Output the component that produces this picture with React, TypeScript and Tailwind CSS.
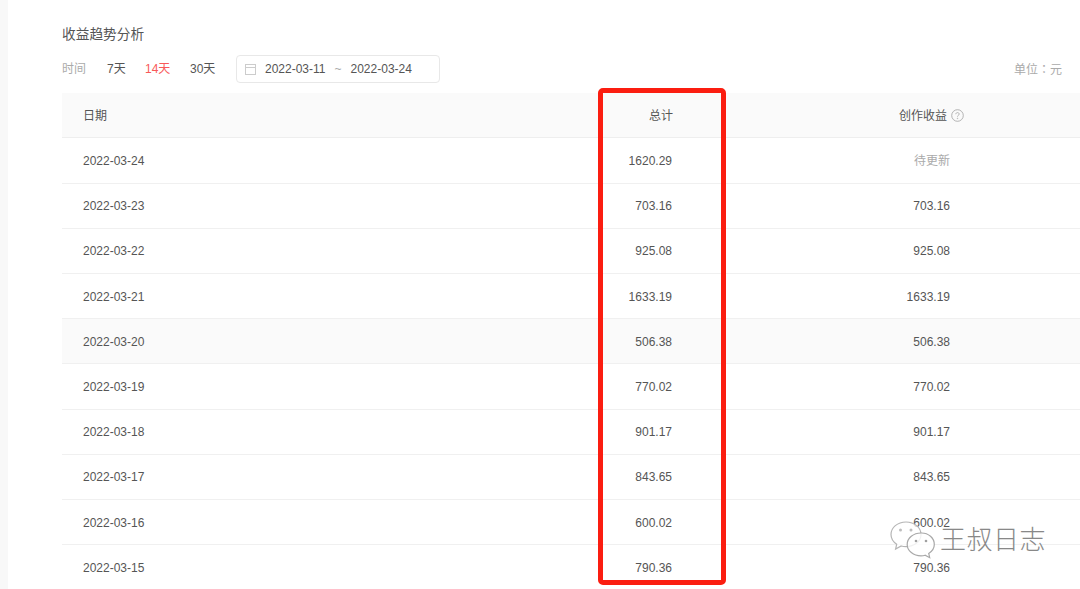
const rows = [
  { date: "2022-03-24", total: "1620.29", income: "待更新" },
  { date: "2022-03-23", total: "703.16", income: "703.16" },
  { date: "2022-03-22", total: "925.08", income: "925.08" },
  { date: "2022-03-21", total: "1633.19", income: "1633.19" },
  { date: "2022-03-20", total: "506.38", income: "506.38" },
  { date: "2022-03-19", total: "770.02", income: "770.02" },
  { date: "2022-03-18", total: "901.17", income: "901.17" },
  { date: "2022-03-17", total: "843.65", income: "843.65" },
  { date: "2022-03-16", total: "600.02", income: "600.02" },
  { date: "2022-03-15", total: "790.36", income: "790.36" },
];

function WeChatMark() {
  return (
    <svg width="46" height="38" viewBox="0 0 46 38" fill="none">
      <path
        d="M16 1C7.5 1 1 6.6 1 13.5c0 4 2.200 7.400 5.700 9.700L5.600 28l5.600-3c1.500.4 3 .6 4.800.6 8.500 0 15-5.400 15-12.100C31 6.600 24.500 1 16 1z"
        fill="#ffffff"
        fillOpacity="0.75"
        stroke="#b5b5b5"
        strokeWidth="1.200"
      />
      <path
        d="M31 12c-7.500 0-13.800 5-13.800 11.400S23.500 34.800 31 34.800c1.400 0 2.800-.2 4.100-.6l4.600 2.500-1-4.300c3.300-2.100 5.600-5.400 5.600-9 0-6.400-5.900-11.400-12.700-11.400z"
        fill="#ffffff"
        fillOpacity="0.8"
        stroke="#a8a8a8"
        strokeWidth="1.200"
      />
      <circle cx="10.500" cy="9" r="1.500" fill="#bdbdbd" />
      <circle cx="21" cy="9" r="1.500" fill="#bdbdbd" />
      <circle cx="26" cy="20" r="1.300" fill="#a0a0a0" />
      <circle cx="36" cy="20" r="1.300" fill="#a0a0a0" />
    </svg>
  );
}

export default function App() {
  return (
    <div className="relative h-[589px] w-[1080px] overflow-hidden bg-white font-['Liberation_Sans','Noto_Sans_CJK_SC',sans-serif] text-xs text-[#555]">
      <div className="flex h-full">
        <div className="w-2 shrink-0 bg-[#f8f8f8]" />

        <main className="w-[1072px] shrink-0 pl-[54px] pt-[26px]">
          <h2 className="h-[18px] text-[13.700px] leading-[18px] text-[#555]">收益趋势分析</h2>

          <div className="mt-[11px] flex h-7 items-center">
            <span className="w-[45px] text-[#aaa]">时间</span>
            <span className="w-[38px]">7天</span>
            <span className="w-[45px] text-[#f85959]">14天</span>
            <span className="w-[46px]">30天</span>
            <div className="flex h-7 w-[204px] items-center rounded border border-[#e8e8e8] pl-2 pr-2">
              <svg width="11" height="11" viewBox="0 0 11 11" fill="none" stroke="#ccc" className="shrink-0">
                <rect x="0.500" y="0.500" width="10" height="10" />
                <path d="M0.500 3.500h10" />
              </svg>
              <span className="ml-[9px]">2022-03-11</span>
              <span className="ml-[9px] text-[#aaa]">~</span>
              <span className="ml-[9px]">2022-03-24</span>
            </div>
            <span className="ml-auto mr-[18px] text-[#aaa]">
              单位<span className="font-['Noto_Sans_CJK_TC']">：</span>元
            </span>
          </div>

          <div className="mt-[10px] overflow-hidden">
            <div className="grid h-[45.300px] grid-cols-[334px_277px_277px_1fr] items-center border-b border-[#eee] bg-[#fafafa] pt-px">
              <span className="pl-[21px]">日期</span>
              <span className="text-right">总计</span>
              <span className="-mr-[14px] flex items-center justify-end gap-1">
                创作收益
                <svg width="13" height="13" viewBox="0 0 13 13" fill="none" stroke="#aaa" strokeWidth="0.900">
                  <circle cx="6.500" cy="6.500" r="5.800" />
                  <path d="M4.800 5.200c0-1 .8-1.600 1.700-1.600s1.700.6 1.700 1.500c0 1.200-1.700 1.200-1.700 2.500" />
                  <circle cx="6.500" cy="9.400" r="0.300" />
                </svg>
              </span>
            </div>
            {rows.map((row) => (
              <div
                key={row.date}
                className={`grid h-[45.220px] grid-cols-[334px_277px_277px_1fr] items-center border-b border-[#f0f0f0] pt-px ${
                  row.date === "2022-03-20" ? "bg-[#fafafa]" : ""
                }`}
              >
                <span className="pl-[21px]">{row.date}</span>
                <span className="pr-px text-right">{row.total}</span>
                <span className={row.income === "待更新" ? "text-right text-[#aaa]" : "text-right"}>{row.income}</span>
              </div>
            ))}
          </div>
        </main>
      </div>

      <div className="absolute left-[598px] top-[88px] h-[497px] w-[128px] rounded-[5px] border-[5px] border-[#fb1d10]" />

      <div className="absolute left-[890px] top-[521px] flex items-center">
        <WeChatMark />
        <span className="ml-[4px] text-[26px] font-light leading-[36px] tracking-[0.500px] text-[#888]">王叔日志</span>
      </div>
    </div>
  );
}
